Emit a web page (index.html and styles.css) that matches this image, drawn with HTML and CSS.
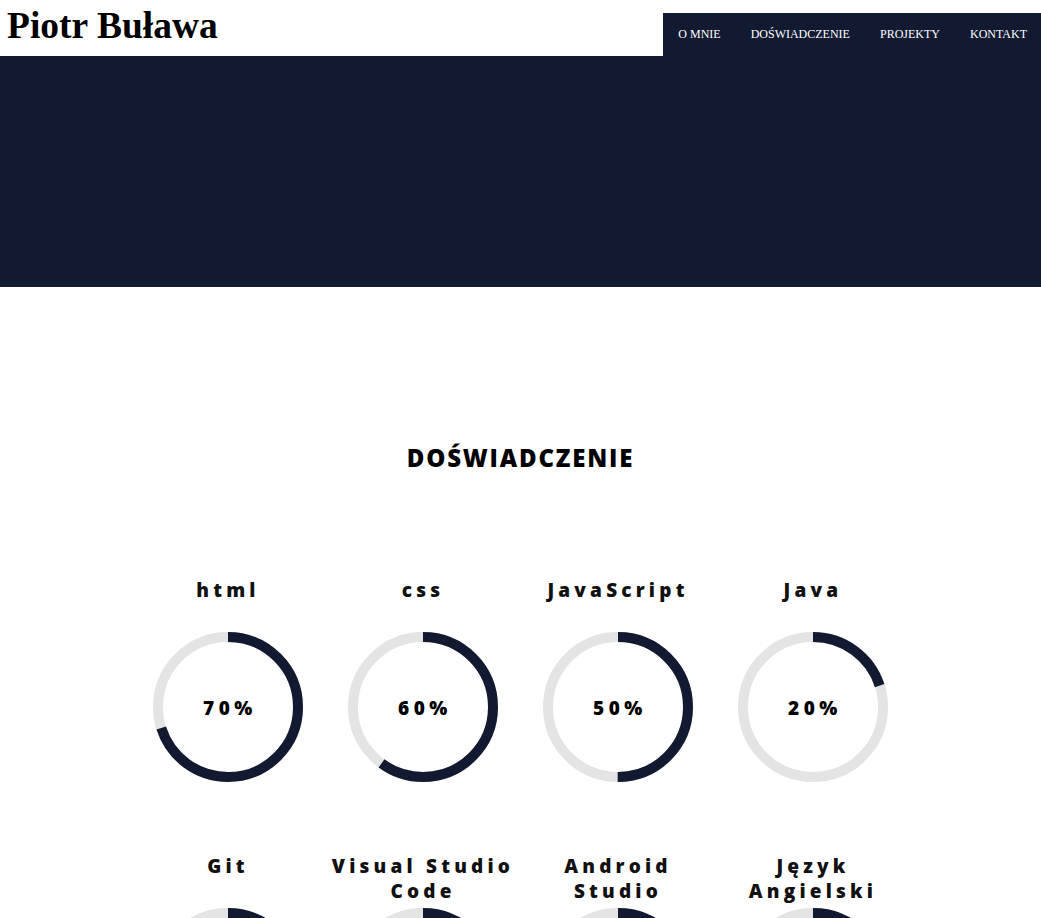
FILE: index.html
```html
<!DOCTYPE html>
<html lang="pl">
<head>
<meta charset="utf-8">
<title>Piotr Buława</title>
<link rel="stylesheet" href="styles.css">
</head>
<body>
<header class="top">
  <h1 class="brand">Piotr Buława</h1>
  <nav class="nav">
    <a href="#">O MNIE</a>
    <a href="#">DOŚWIADCZENIE</a>
    <a href="#">PROJEKTY</a>
    <a href="#">KONTAKT</a>
  </nav>
</header>
<section class="hero"></section>
<section class="skills">
  <h2 class="skills-title">DOŚWIADCZENIE</h2>
  <div class="grid">
    <div class="skill">
      <div class="label">html</div>
      <div class="ring">
        <svg viewBox="0 0 150 150" width="150" height="150"><circle class="track" cx="75" cy="75" r="70"/><circle class="bar" cx="75" cy="75" r="70" style="stroke-dasharray: 307.9 439.8"/></svg>
        <span class="pct">70%</span>
      </div>
    </div>
    <div class="skill">
      <div class="label">css</div>
      <div class="ring">
        <svg viewBox="0 0 150 150" width="150" height="150"><circle class="track" cx="75" cy="75" r="70"/><circle class="bar" cx="75" cy="75" r="70" style="stroke-dasharray: 263.9 439.8"/></svg>
        <span class="pct">60%</span>
      </div>
    </div>
    <div class="skill">
      <div class="label">JavaScript</div>
      <div class="ring">
        <svg viewBox="0 0 150 150" width="150" height="150"><circle class="track" cx="75" cy="75" r="70"/><circle class="bar" cx="75" cy="75" r="70" style="stroke-dasharray: 219.9 439.8"/></svg>
        <span class="pct">50%</span>
      </div>
    </div>
    <div class="skill">
      <div class="label">Java</div>
      <div class="ring">
        <svg viewBox="0 0 150 150" width="150" height="150"><circle class="track" cx="75" cy="75" r="70"/><circle class="bar" cx="75" cy="75" r="70" style="stroke-dasharray: 88 439.8"/></svg>
        <span class="pct">20%</span>
      </div>
    </div>
    <div class="skill">
      <div class="label">Git</div>
      <div class="ring">
        <svg viewBox="0 0 150 150" width="150" height="150"><circle class="track" cx="75" cy="75" r="70"/><circle class="bar" cx="75" cy="75" r="70" style="stroke-dasharray: 219.9 439.8"/></svg>
        <span class="pct">50%</span>
      </div>
    </div>
    <div class="skill">
      <div class="label">Visual Studio Code</div>
      <div class="ring">
        <svg viewBox="0 0 150 150" width="150" height="150"><circle class="track" cx="75" cy="75" r="70"/><circle class="bar" cx="75" cy="75" r="70" style="stroke-dasharray: 263.9 439.8"/></svg>
        <span class="pct">60%</span>
      </div>
    </div>
    <div class="skill">
      <div class="label">Android Studio</div>
      <div class="ring">
        <svg viewBox="0 0 150 150" width="150" height="150"><circle class="track" cx="75" cy="75" r="70"/><circle class="bar" cx="75" cy="75" r="70" style="stroke-dasharray: 175.9 439.8"/></svg>
        <span class="pct">40%</span>
      </div>
    </div>
    <div class="skill">
      <div class="label">Język Angielski</div>
      <div class="ring">
        <svg viewBox="0 0 150 150" width="150" height="150"><circle class="track" cx="75" cy="75" r="70"/><circle class="bar" cx="75" cy="75" r="70" style="stroke-dasharray: 307.9 439.8"/></svg>
        <span class="pct">70%</span>
      </div>
    </div>
  </div>
</section>
</body>
</html>
```

FILE: styles.css
```css
html, body {
  margin: 0;
  padding: 0;
  background: #fff;
}

.top {
  display: flex;
  justify-content: space-between;
  align-items: flex-end;
  height: 56px;
}

.brand {
  margin: 0;
  align-self: flex-start;
  padding: 4px 0 0 7px;
  font-family: "Liberation Serif", "Times New Roman", serif;
  font-weight: bold;
  font-size: 37.5px;
  line-height: normal;
  color: #000;
}

.nav {
  display: flex;
  align-items: center;
  height: 43px;
  padding: 0 14px 0 0;
  background: #121a32;
}

.nav a {
  padding: 0 15px;
  font-family: "Liberation Serif", "Times New Roman", serif;
  font-size: 12px;
  color: #fff;
  text-decoration: none;
}

.nav a:last-child {
  padding-right: 0;
}

.hero {
  height: 231px;
  background: #121a32;
}

.skills {
  padding-top: 156px;
}

.skills-title {
  margin: 0;
  text-align: center;
  font-family: "Open Sans", sans-serif;
  font-weight: 800;
  font-size: 24px;
  line-height: 30px;
  letter-spacing: 1.8px;
  color: #000;
}

.grid {
  display: grid;
  grid-template-columns: repeat(4, 195px);
  justify-content: center;
  row-gap: 72px;
  margin-top: 105px;
}

.skill {
  display: flex;
  flex-direction: column;
  align-items: center;
}

.label {
  min-height: 50px;
  width: 195px;
  text-align: center;
  font-family: "Open Sans", sans-serif;
  font-weight: 800;
  font-size: 19px;
  line-height: 25px;
  letter-spacing: 4.2px;
  color: #111;
  margin-bottom: 4px;
}

.ring {
  position: relative;
  width: 150px;
  height: 150px;
}

.ring svg {
  display: block;
  transform: rotate(-90deg);
}

.track {
  fill: none;
  stroke: #e4e4e4;
  stroke-width: 10;
}

.bar {
  fill: none;
  stroke: #121a32;
  stroke-width: 10;
}

.pct {
  position: absolute;
  inset: 0;
  display: flex;
  align-items: center;
  justify-content: center;
  padding: 2px 0 0 4px;
  font-family: "Open Sans", sans-serif;
  font-weight: 800;
  font-size: 19px;
  letter-spacing: 4.5px;
  color: #000;
}
```
